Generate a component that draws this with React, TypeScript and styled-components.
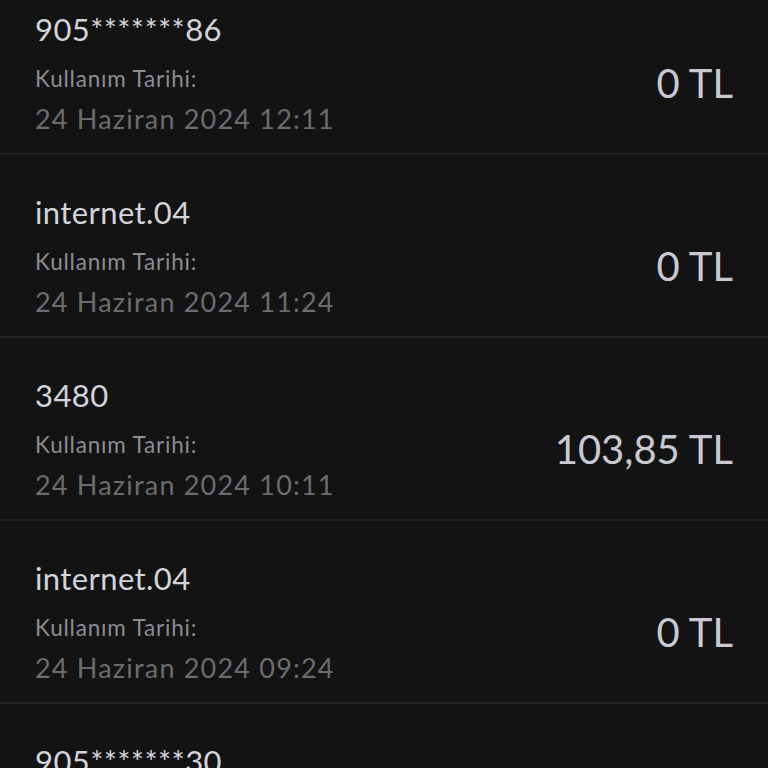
import { createGlobalStyle, styled } from "styled-components";

const GlobalStyle = createGlobalStyle`
  html, body {
    margin: 0;
    padding: 0;
    background: #131313;
  }
  body {
    font-family: Lato, "Noto Sans", "Liberation Sans", sans-serif;
    overflow: hidden;
  }
`;

const Page = styled.div`
  width: 768px;
  height: 768px;
  overflow: hidden;
  background: #131313;
`;

// liste kaydırılmış halde, ilk kayıt yarım görünüyor
const UsageList = styled.ul`
  list-style: none;
  margin: -28px 0 0;
  padding: 0;
`;

const UsageRow = styled.li`
  height: 181px;
  box-sizing: content-box;
  border-bottom: 2px solid #222224;
  padding: 0 35px;
  display: flex;
  justify-content: space-between;
  align-items: flex-start;
`;

const Info = styled.div`
  display: flex;
  flex-direction: column;
  padding-top: 37px;
`;

const Title = styled.div`
  font-size: 31px;
  line-height: 40px;
  color: #d3d3db;
  letter-spacing: 0.4px;
`;

const Label = styled.div`
  margin-top: 15px;
  font-size: 22.5px;
  line-height: 30px;
  color: #8c8c93;
  letter-spacing: 0.8px;
`;

const DateText = styled.div`
  margin-top: 8px;
  font-size: 27px;
  line-height: 34px;
  color: #6b6c71;
  letter-spacing: 1.2px;
`;

const Amount = styled.div`
  margin-top: 87px;
  font-size: 40px;
  line-height: 48px;
  color: #c9c9d3;
  white-space: nowrap;
`;

type Usage = {
  title: string;
  date: string;
  amount: string;
};

const usages: Usage[] = [
  { title: "905*******86", date: "24 Haziran 2024 12:11", amount: "0 TL" },
  { title: "internet.04", date: "24 Haziran 2024 11:24", amount: "0 TL" },
  { title: "3480", date: "24 Haziran 2024 10:11", amount: "103,85 TL" },
  { title: "internet.04", date: "24 Haziran 2024 09:24", amount: "0 TL" },
  { title: "905*******30", date: "24 Haziran 2024 08:57", amount: "0 TL" },
];

const App = () => {
  return (
    <Page>
      <GlobalStyle />
      <UsageList>
        {usages.map((u, i) => (
          <UsageRow key={i}>
            <Info>
              <Title>{u.title}</Title>
              <Label>Kullanım Tarihi:</Label>
              <DateText>{u.date}</DateText>
            </Info>
            <Amount>{u.amount}</Amount>
          </UsageRow>
        ))}
      </UsageList>
    </Page>
  );
};

export default App;
